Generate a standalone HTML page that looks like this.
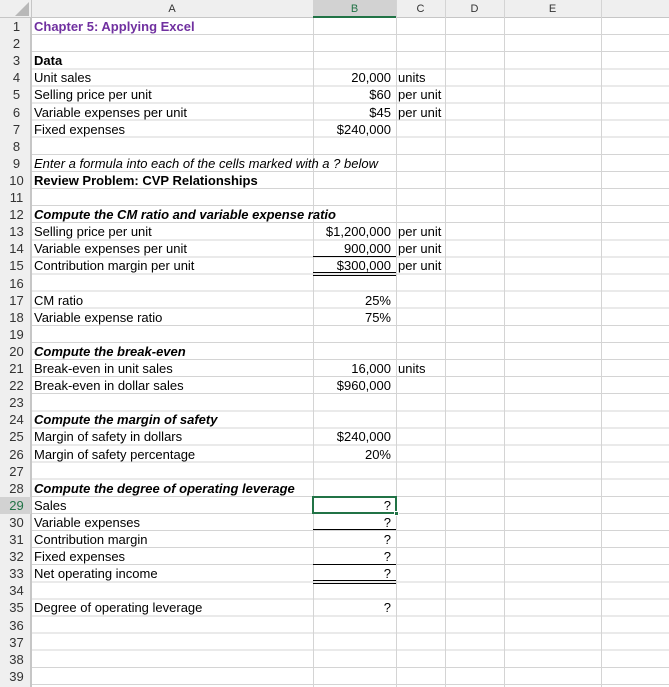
<!DOCTYPE html>
<html><head><style>
*{margin:0;padding:0;box-sizing:border-box}
body{width:669px;height:687px;overflow:hidden;background:#fff;font-family:"Liberation Sans",Arial,sans-serif;font-size:13px;color:#000;position:relative}
.grid{position:absolute;left:0;top:18px;width:669px;height:669px;
background-image:repeating-linear-gradient(to bottom,transparent 0,transparent 16.1px,#d4d4d4 16.1px,#d4d4d4 17.1px);}
.v{position:absolute;top:0;height:687px;width:1px;background:#d4d4d4}
.hdr{position:absolute;top:0;left:0;width:669px;height:18px;background:#efefef;border-bottom:1px solid #c6c6c6}
.rh{position:absolute;left:0;top:18px;width:31px;height:669px;background:#efefef;border-right:1px solid #c6c6c6}
.ch{position:absolute;top:0;height:18px;line-height:18px;text-align:center;color:#333;font-size:11px}
.r{position:absolute;left:0;width:669px;height:17px;line-height:18px;white-space:nowrap}
.n{position:absolute;left:0;width:33px;text-align:center;color:#333}
.a{position:absolute;left:34px}
.b{position:absolute;right:278px;text-align:right}
.c{position:absolute;left:398px}
.bi{font-weight:bold;font-style:italic}
</style></head><body>
<div class="grid"></div>
<div class="hdr"></div>
<div class="rh"></div>
<div style="position:absolute;left:0;top:496.8px;width:31px;height:17.1px;background:#d2d2d2"></div>
<div class="v" style="left:31px;background:#c6c6c6"></div>
<div class="v" style="left:313px"></div>
<div class="v" style="left:396px"></div>
<div class="v" style="left:445px"></div>
<div class="v" style="left:504px"></div>
<div class="v" style="left:601px"></div>
<div style="position:absolute;left:313px;top:0;width:83px;height:18px;background:#d2d2d2;border-bottom:2px solid #217346"></div>
<div style="position:absolute;width:0;height:0;border-left:14px solid transparent;border-bottom:14px solid #b8b8b8;top:2px;left:15px"></div>
<div class="ch" style="left:31px;width:282px">A</div>
<div class="ch" style="left:313px;width:83px;color:#217346">B</div>
<div class="ch" style="left:396px;width:49px">C</div>
<div class="ch" style="left:445px;width:59px">D</div>
<div class="ch" style="left:504px;width:97px">E</div>

<div style="position:absolute;left:313px;top:256px;width:83px;height:1px;background:#000"></div>
<div style="position:absolute;left:313px;top:272px;width:83px;height:4px;border-top:1px solid #000;border-bottom:1px solid #000"></div>
<div style="position:absolute;left:313px;top:529px;width:83px;height:1px;background:#000"></div>
<div style="position:absolute;left:313px;top:564px;width:83px;height:1px;background:#000"></div>
<div style="position:absolute;left:313px;top:580px;width:83px;height:4px;border-top:1px solid #000;border-bottom:1px solid #000"></div>
<div style="position:absolute;left:312px;top:496px;width:85px;height:18px;border:2px solid #217346"></div>
<div style="position:absolute;left:394px;top:511px;width:5px;height:5px;background:#217346;border:1px solid #fff"></div>

<div class="r" style="top:18px"><span class="n">1</span><span class="a" style="color:#7030a0;font-weight:bold">Chapter 5: Applying Excel</span></div>
<div class="r" style="top:35.1px"><span class="n">2</span></div>
<div class="r" style="top:52.2px"><span class="n">3</span><span class="a" style="font-weight:bold">Data</span></div>
<div class="r" style="top:69.3px"><span class="n">4</span><span class="a">Unit sales</span><span class="b">20,000</span><span class="c">units</span></div>
<div class="r" style="top:86.4px"><span class="n">5</span><span class="a">Selling price per unit</span><span class="b">$60</span><span class="c">per unit</span></div>
<div class="r" style="top:103.5px"><span class="n">6</span><span class="a">Variable expenses per unit</span><span class="b">$45</span><span class="c">per unit</span></div>
<div class="r" style="top:120.6px"><span class="n">7</span><span class="a">Fixed expenses</span><span class="b">$240,000</span></div>
<div class="r" style="top:137.7px"><span class="n">8</span></div>
<div class="r" style="top:154.8px"><span class="n">9</span><span class="a" style="font-style:italic">Enter a formula into each of the cells marked with a ? below</span></div>
<div class="r" style="top:171.9px"><span class="n">10</span><span class="a" style="font-weight:bold">Review Problem: CVP Relationships</span></div>
<div class="r" style="top:189px"><span class="n">11</span></div>
<div class="r" style="top:206.1px"><span class="n">12</span><span class="a bi">Compute the CM ratio and variable expense ratio</span></div>
<div class="r" style="top:223.2px"><span class="n">13</span><span class="a">Selling price per unit</span><span class="b">$1,200,000</span><span class="c">per unit</span></div>
<div class="r" style="top:240.3px"><span class="n">14</span><span class="a">Variable expenses per unit</span><span class="b">900,000</span><span class="c">per unit</span></div>
<div class="r" style="top:257.4px"><span class="n">15</span><span class="a">Contribution margin per unit</span><span class="b">$300,000</span><span class="c">per unit</span></div>
<div class="r" style="top:274.5px"><span class="n">16</span></div>
<div class="r" style="top:291.6px"><span class="n">17</span><span class="a">CM ratio</span><span class="b">25%</span></div>
<div class="r" style="top:308.7px"><span class="n">18</span><span class="a">Variable expense ratio</span><span class="b">75%</span></div>
<div class="r" style="top:325.8px"><span class="n">19</span></div>
<div class="r" style="top:342.9px"><span class="n">20</span><span class="a bi">Compute the break-even</span></div>
<div class="r" style="top:360px"><span class="n">21</span><span class="a">Break-even in unit sales</span><span class="b">16,000</span><span class="c">units</span></div>
<div class="r" style="top:377.1px"><span class="n">22</span><span class="a">Break-even in dollar sales</span><span class="b">$960,000</span></div>
<div class="r" style="top:394.2px"><span class="n">23</span></div>
<div class="r" style="top:411.3px"><span class="n">24</span><span class="a bi">Compute the margin of safety</span></div>
<div class="r" style="top:428.4px"><span class="n">25</span><span class="a">Margin of safety in dollars</span><span class="b">$240,000</span></div>
<div class="r" style="top:445.5px"><span class="n">26</span><span class="a">Margin of safety percentage</span><span class="b">20%</span></div>
<div class="r" style="top:462.6px"><span class="n">27</span></div>
<div class="r" style="top:479.7px"><span class="n">28</span><span class="a bi">Compute the degree of operating leverage</span></div>
<div class="r" style="top:496.8px"><span class="n" style="color:#217346">29</span><span class="a">Sales</span><span class="b">?</span></div>
<div class="r" style="top:513.9px"><span class="n">30</span><span class="a">Variable expenses</span><span class="b">?</span></div>
<div class="r" style="top:531px"><span class="n">31</span><span class="a">Contribution margin</span><span class="b">?</span></div>
<div class="r" style="top:548.1px"><span class="n">32</span><span class="a">Fixed expenses</span><span class="b">?</span></div>
<div class="r" style="top:565.2px"><span class="n">33</span><span class="a">Net operating income</span><span class="b">?</span></div>
<div class="r" style="top:582.3px"><span class="n">34</span></div>
<div class="r" style="top:599.4px"><span class="n">35</span><span class="a">Degree of operating leverage</span><span class="b">?</span></div>
<div class="r" style="top:616.5px"><span class="n">36</span></div>
<div class="r" style="top:633.6px"><span class="n">37</span></div>
<div class="r" style="top:650.7px"><span class="n">38</span></div>
<div class="r" style="top:667.8px"><span class="n">39</span></div>
</body></html>
